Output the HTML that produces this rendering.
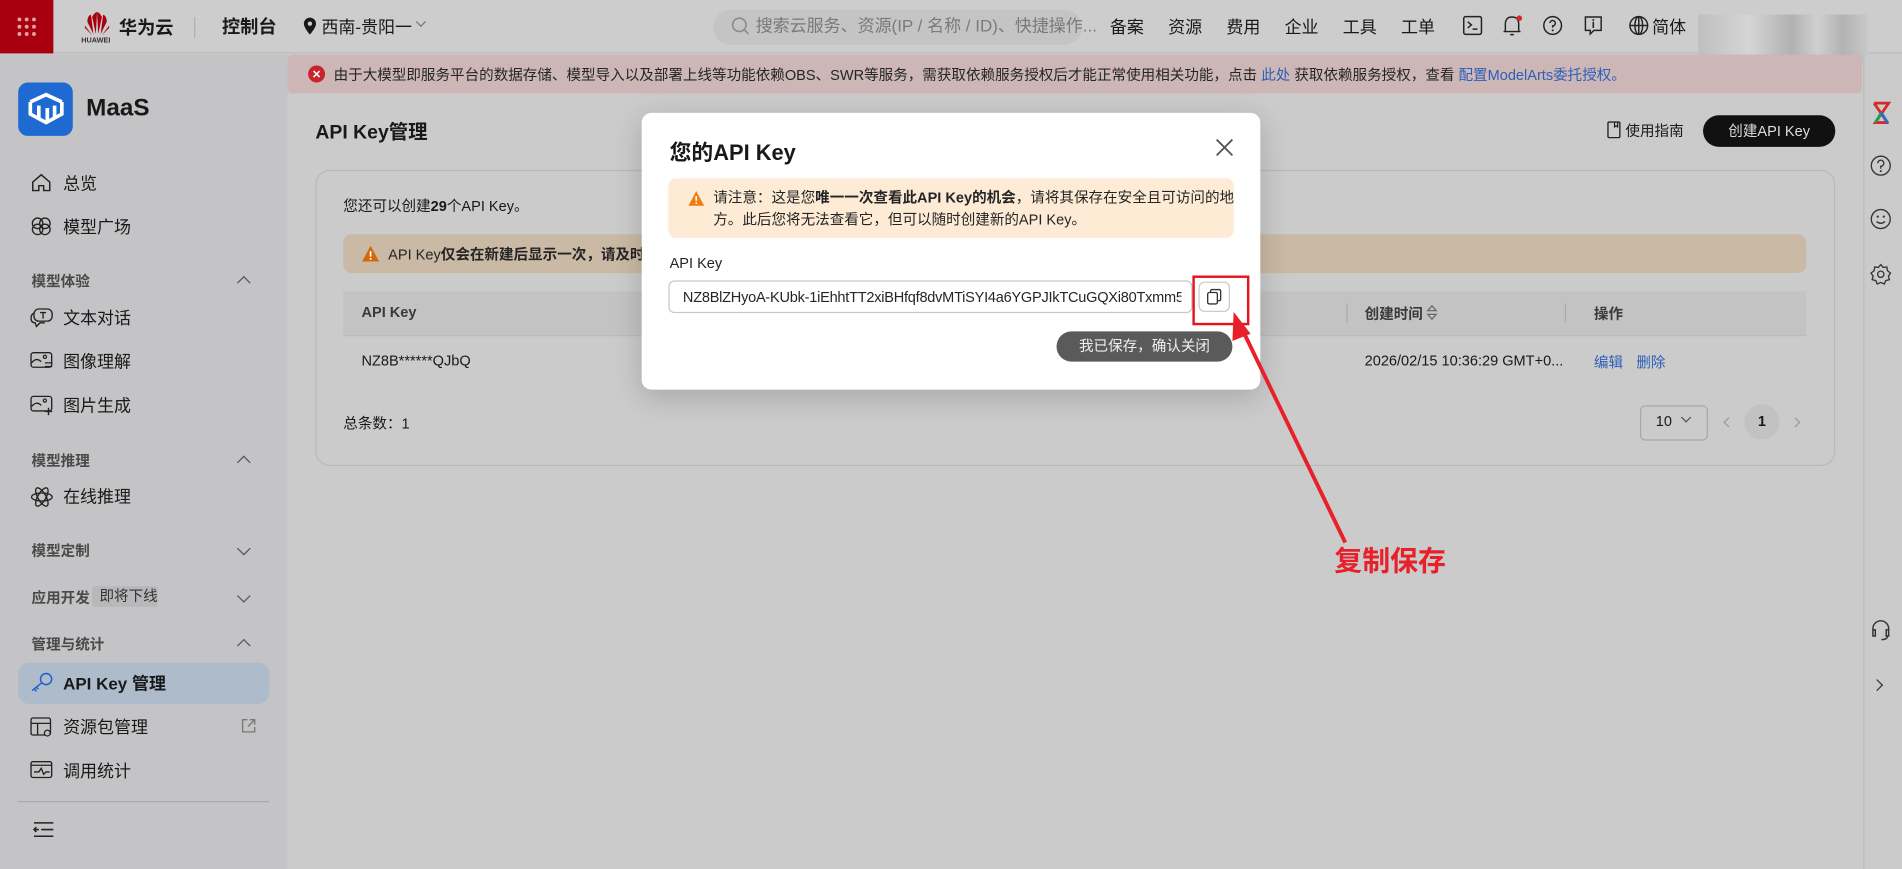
<!DOCTYPE html>
<html><head><meta charset="utf-8"><style>
*{box-sizing:border-box;margin:0;padding:0}
html,body{width:1902px;height:869px;overflow:hidden;background:#cbcbcb}
body{font-family:"Liberation Sans","Noto Sans CJK SC",sans-serif;color:#191919}
#w{position:absolute;left:0;top:0;width:1568px;height:716px;transform:scale(1.21301,1.21369);transform-origin:0 0;background:#cbcbcb;overflow:hidden}
.a{position:absolute;white-space:nowrap}
svg{position:absolute;overflow:visible}
.nav{font-size:14px;color:#191919}
.grp{font-size:12px;font-weight:bold;color:#4a4a4a}
.chev{position:absolute;left:197px;width:8px;height:8px;border-left:1.3px solid #555;border-top:1.3px solid #555}
.up{transform:rotate(45deg)}.dn{transform:rotate(225deg)}
.top{font-size:14px;color:#191919}
</style></head><body><div id="w">
<!-- header -->
<div class="a" style="left:0;top:0;width:1568px;height:44px;background:#cdcdcd;border-bottom:1px solid #bdbdbd"></div>
<div class="a" style="left:0;top:0;width:44px;height:44px;background:#a8000e"></div>
<svg style="left:13px;top:13px" width="18" height="18"><g fill="#e8a0a5"><circle cx="3" cy="3" r="1.6"/><circle cx="9" cy="3" r="1.6"/><circle cx="15" cy="3" r="1.6"/><circle cx="3" cy="9" r="1.6"/><circle cx="9" cy="9" r="1.6"/><circle cx="15" cy="9" r="1.6"/><circle cx="3" cy="15" r="1.6"/><circle cx="9" cy="15" r="1.6"/><circle cx="15" cy="15" r="1.6"/></g></svg>
<svg style="left:70px;top:10px" width="30" height="22"><g fill="#a8000e"><path d="M7 18 L2 8 Q2 3 5 2 Z"/><path d="M9 18 L6 4 Q8 0 10 0 Z"/><path d="M11 18 L14 4 Q12 0 10 0 Z"/><path d="M13 18 L18 8 Q18 3 15 2 Z"/><path d="M6 19 L0 13 L0 11 Z"/><path d="M14 19 L20 13 L20 11 Z"/></g></svg>
<div class="a" style="left:67px;top:31px;font-size:6px;font-weight:bold;color:#333">HUAWEI</div>
<div class="a" style="left:98px;top:12px;font-size:15px;font-weight:bold">华为云</div>
<div class="a" style="left:160px;top:14px;width:1px;height:17px;background:#b0b0b0"></div>
<div class="a" style="left:183px;top:11px;font-size:15px;font-weight:bold">控制台</div>
<svg style="left:250px;top:14px" width="11" height="15"><path d="M5.5 0.5a5 5 0 0 1 5 5c0 3.5-5 9-5 9s-5-5.5-5-9a5 5 0 0 1 5-5z" fill="#191919"/><circle cx="5.5" cy="5.5" r="1.8" fill="#cdcdcd"/></svg>
<div class="a" style="left:265px;top:12px;font-size:14px">西南-贵阳一</div>
<div class="a" style="left:344px;top:15px;width:6px;height:6px;border-right:1.2px solid #777;border-bottom:1.2px solid #777;transform:rotate(45deg)"></div>
<div class="a" style="left:588px;top:8px;width:304px;height:29px;background:#c4c4c4;border-radius:15px"></div>
<svg style="left:603px;top:14px" width="15" height="15"><circle cx="6.5" cy="6.5" r="5.5" fill="none" stroke="#8a8a8a" stroke-width="1.3"/><path d="M10.5 10.5 L14 14" stroke="#8a8a8a" stroke-width="1.3"/></svg>
<div class="a" style="left:623px;top:11px;font-size:14px;color:#7a7a7a">搜索云服务、资源(IP / 名称 / ID)、快捷操作...</div>
<div class="a top" style="left:915px;top:12px">备案</div>
<div class="a top" style="left:963px;top:12px">资源</div>
<div class="a top" style="left:1011px;top:12px">费用</div>
<div class="a top" style="left:1059px;top:12px">企业</div>
<div class="a top" style="left:1107px;top:12px">工具</div>
<div class="a top" style="left:1155px;top:12px">工单</div>
<svg style="left:1206px;top:13px" width="16" height="16"><rect x="0.7" y="0.7" width="14.6" height="14.6" rx="1.5" fill="none" stroke="#222" stroke-width="1.2"/><path d="M4 5l3 2.5-3 2.5M8 11h4" fill="none" stroke="#222" stroke-width="1.2"/></svg>
<svg style="left:1239px;top:12px" width="16" height="18"><path d="M2 14 L2 8 Q2 2 7.5 2 Q13 2 13 8 L13 14 Z M0.5 14h14 M6 16.5h3" fill="none" stroke="#222" stroke-width="1.2"/><circle cx="13.5" cy="3" r="2.3" fill="#d6262c"/></svg>
<svg style="left:1272px;top:13px" width="16" height="16"><circle cx="8" cy="8" r="7.3" fill="none" stroke="#222" stroke-width="1.2"/><path d="M5.8 6a2.2 2.2 0 1 1 2.2 2.3v1.5" fill="none" stroke="#222" stroke-width="1.2"/><circle cx="8" cy="12" r=".8" fill="#222"/></svg>
<svg style="left:1306px;top:13px" width="15" height="17"><path d="M1 1h13v11H8l-3 3v-3H1z" fill="none" stroke="#222" stroke-width="1.2"/><path d="M7.5 5v5" stroke="#222" stroke-width="1.3"/><circle cx="7.5" cy="3.5" r=".8" fill="#222"/></svg>
<svg style="left:1343px;top:13px" width="16" height="16"><circle cx="8" cy="8" r="7.3" fill="none" stroke="#222" stroke-width="1.2"/><ellipse cx="8" cy="8" rx="3.2" ry="7.3" fill="none" stroke="#222" stroke-width="1.2"/><path d="M0.7 8h14.6M8 .7v14.6" stroke="#222" stroke-width="1.2"/></svg>
<div class="a top" style="left:1362px;top:12px">简体</div>
<div class="a" style="left:1400px;top:12px;width:140px;height:40px;background:linear-gradient(90deg,#bdbdbd 0,#d6d6d6 30%,#aeaeae 55%,#d0d0d0 70%,#b0b0b0 85%,#c8c8c8 100%);opacity:.9"></div>
<!-- sidebar -->
<div class="a" style="left:0;top:45px;width:237px;height:671px;background:#c4c4c6"></div>
<div class="a" style="left:15px;top:68px;width:45px;height:44px;background:#1e69d2;border-radius:8px"></div>
<svg style="left:22px;top:76px" width="32" height="28"><path d="M3 8 L16 2 L29 8 M3 8 L3 18 L16 25 L29 18 L29 8 M10 11 L10 21 M17 13 L17 24 M23 11 L23 21" fill="none" stroke="#fff" stroke-width="3"/></svg>
<div class="a" style="left:71px;top:78px;font-size:20px;font-weight:bold;color:#191919">MaaS</div>
<svg style="left:26px;top:143px" width="16" height="15"><path d="M1 7 L8 1 L15 7 L15 14 L10 14 L10 10 L6 10 L6 14 L1 14 Z" fill="none" stroke="#222" stroke-width="1.2"/></svg>
<div class="a nav" style="left:52px;top:141px">总览</div>
<svg style="left:25px;top:179px" width="18" height="15"><circle cx="6" cy="5" r="4.3" fill="none" stroke="#222" stroke-width="1.1"/><circle cx="12" cy="5" r="4.3" fill="none" stroke="#222" stroke-width="1.1"/><circle cx="6" cy="10" r="4.3" fill="none" stroke="#222" stroke-width="1.1"/><circle cx="12" cy="10" r="4.3" fill="none" stroke="#222" stroke-width="1.1"/></svg>
<div class="a nav" style="left:52px;top:177px">模型广场</div>
<div class="a grp" style="left:26px;top:223px">模型体验</div><div class="chev up" style="top:229px"></div>
<svg style="left:25px;top:254px" width="19" height="16"><rect x="3" y=".6" width="15" height="10" rx="4" fill="none" stroke="#222" stroke-width="1.1"/><path d="M3 4 Q.6 5 .6 8 Q.6 12 4 12 L5 15 L8 12 L12 12" fill="none" stroke="#222" stroke-width="1.1"/><path d="M8 3.5h5M10.5 3.5v5" stroke="#222" stroke-width="1.1"/></svg>
<div class="a nav" style="left:52px;top:252px">文本对话</div>
<svg style="left:25px;top:290px" width="19" height="15"><rect x=".6" y=".6" width="17" height="12" rx="2" fill="none" stroke="#222" stroke-width="1.1"/><path d="M1 9 Q5 4 9 8" fill="none" stroke="#222" stroke-width="1.1"/><circle cx="12" cy="4" r="1.3" fill="none" stroke="#222"/><path d="M12 9h6M12 12h6" stroke="#222"/></svg>
<div class="a nav" style="left:52px;top:288px">图像理解</div>
<svg style="left:25px;top:326px" width="19" height="17"><rect x=".6" y=".6" width="17" height="12" rx="2" fill="none" stroke="#222" stroke-width="1.1"/><path d="M1 9 Q5 4 9 8" fill="none" stroke="#222" stroke-width="1.1"/><circle cx="12" cy="4" r="1.3" fill="none" stroke="#222"/><path d="M15 10v6M12 13h6" stroke="#222" stroke-width="1.2"/></svg>
<div class="a nav" style="left:52px;top:324px">图片生成</div>
<div class="a grp" style="left:26px;top:371px">模型推理</div><div class="chev up" style="top:377px"></div>
<svg style="left:25px;top:402px" width="19" height="15"><ellipse cx="9.5" cy="7.5" rx="8.5" ry="3.3" fill="none" stroke="#222" stroke-width="1.1"/><ellipse cx="9.5" cy="7.5" rx="8.5" ry="3.3" transform="rotate(60 9.5 7.5)" fill="none" stroke="#222" stroke-width="1.1"/><ellipse cx="9.5" cy="7.5" rx="8.5" ry="3.3" transform="rotate(-60 9.5 7.5)" fill="none" stroke="#222" stroke-width="1.1"/></svg>
<div class="a nav" style="left:52px;top:399px">在线推理</div>
<div class="a grp" style="left:26px;top:445px">模型定制</div><div class="chev dn" style="top:448px"></div>
<div class="a grp" style="left:26px;top:484px">应用开发</div>
<div class="a" style="left:76px;top:483px;width:54px;height:17px;background:#b8b8ba;border-radius:2px;font-size:12px;color:#333;padding-left:6px;line-height:17px">即将下线</div>
<div class="chev dn" style="top:487px"></div>
<div class="a grp" style="left:26px;top:522px">管理与统计</div><div class="chev up" style="top:528px"></div>
<div class="a" style="left:15px;top:546px;width:207px;height:34px;background:#aebbcb;border-radius:9px"></div>
<svg style="left:25px;top:554px" width="19" height="16"><circle cx="13" cy="5.5" r="4.6" fill="none" stroke="#1e5fc8" stroke-width="1.2"/><path d="M9.5 8.5 L1.5 15 M3.2 13.6 L5 15.5 M5 12.2 L6.6 13.8" stroke="#1e5fc8" stroke-width="1.2" fill="none"/></svg>
<div class="a" style="left:52px;top:553px;font-size:14px;font-weight:bold">API Key 管理</div>
<svg style="left:25px;top:591px" width="19" height="17"><rect x=".6" y=".6" width="16" height="14" rx="1.5" fill="none" stroke="#222" stroke-width="1.1"/><path d="M.6 5h16M6 5v10" stroke="#222" stroke-width="1.1"/><circle cx="14" cy="13" r="2.4" fill="#c4c4c6" stroke="#222"/></svg>
<div class="a nav" style="left:52px;top:589px">资源包管理</div>
<svg style="left:199px;top:592px" width="12" height="12"><path d="M5 1H1v10h10V7M7 1h4v4M11 1L5.5 6.5" fill="none" stroke="#777" stroke-width="1.1"/></svg>
<svg style="left:25px;top:627px" width="19" height="15"><rect x=".6" y=".6" width="17" height="13" rx="1.5" fill="none" stroke="#222" stroke-width="1.1"/><path d="M.6 3.5h17M3 9h4l2-3 2 5 2-2h3" fill="none" stroke="#222" stroke-width="1.1"/></svg>
<div class="a nav" style="left:52px;top:625px">调用统计</div>
<div class="a" style="left:15px;top:660px;width:207px;height:1px;background:#aaa"></div>
<svg style="left:28px;top:677px" width="16" height="13"><path d="M0 1h16M6 6.5h10M0 12h16M0 6.5h4M2 4.5L0 6.5 2 8.5" fill="none" stroke="#222" stroke-width="1.3"/></svg>
<!-- right bar -->
<div class="a" style="left:1536px;top:45px;width:32px;height:671px;background:#cbcbcb;border-left:1px solid #bcbcbc"></div>
<svg style="left:1543px;top:84px" width="16" height="18"><path d="M2 1h12L3 17h11M2 1l11 16" fill="none" stroke="#d52a2a" stroke-width="2.3"/><path d="M3 17L8 9" stroke="#18a058" stroke-width="2.3"/><path d="M13 17L8 9" stroke="#1e6fd9" stroke-width="2.3"/></svg>
<svg style="left:1542px;top:128px" width="17" height="17"><circle cx="8.5" cy="8.5" r="7.8" fill="none" stroke="#333" stroke-width="1.1"/><path d="M6 6.5a2.5 2.5 0 1 1 2.5 2.5v2" fill="none" stroke="#333" stroke-width="1.1"/><circle cx="8.5" cy="13" r=".8" fill="#333"/></svg>
<svg style="left:1542px;top:172px" width="17" height="17"><circle cx="8.5" cy="8.5" r="7.8" fill="none" stroke="#333" stroke-width="1.1"/><circle cx="6" cy="6.5" r=".9" fill="#333"/><circle cx="11" cy="6.5" r=".9" fill="#333"/><path d="M5 10.5q3.5 3 7 0" fill="none" stroke="#333" stroke-width="1.1"/></svg>
<svg style="left:1542px;top:217px" width="17" height="18"><path d="M8.5 1l2 2.3 3-.3.5 3 2.5 2-1.7 2.5.8 2.9-3 .8-1.2 2.8-2.9-1.3-2.9 1.3-1.2-2.8-3-.8.8-2.9L.5 8l2.5-2 .5-3 3 .3z" fill="none" stroke="#333" stroke-width="1.1"/><circle cx="8.5" cy="9" r="2.6" fill="none" stroke="#333" stroke-width="1.1"/></svg>
<svg style="left:1542px;top:510px" width="17" height="18"><path d="M2 10V8a6.5 6.5 0 0 1 13 0v2M2 9h2v5H2zM13 9h2v5h-2zM14 14q0 3-5 3" fill="none" stroke="#333" stroke-width="1.2"/></svg>
<div class="a" style="left:1544px;top:561px;width:7px;height:7px;border-right:1.3px solid #333;border-top:1.3px solid #333;transform:rotate(45deg)"></div>
<!-- banner -->
<div class="a" style="left:237px;top:45px;width:1298px;height:32px;background:#cdb6b6;border-radius:4px"></div>
<svg style="left:254px;top:54px" width="14" height="14"><circle cx="7" cy="7" r="7" fill="#c8242c"/><path d="M4.5 4.5l5 5M9.5 4.5l-5 5" stroke="#fff" stroke-width="1.3"/></svg>
<div class="a" style="left:275px;top:53px;font-size:12px;color:#252525">由于大模型即服务平台的数据存储、模型导入以及部署上线等功能依赖OBS、SWR等服务，需获取依赖服务授权后才能正常使用相关功能，点击 <span style="color:#2c5fb8">此处</span> 获取依赖服务授权，查看 <span style="color:#2c5fb8">配置ModelArts委托授权。</span></div>
<!-- main -->
<div class="a" style="left:260px;top:95px;font-size:16px;font-weight:bold">API Key管理</div>
<svg style="left:1325px;top:100px" width="11" height="14"><rect x=".6" y=".6" width="9.8" height="12.8" rx="1" fill="none" stroke="#222" stroke-width="1.1"/><path d="M6 .6v4l1.3-1 1.3 1v-4" fill="none" stroke="#222"/></svg>
<div class="a" style="left:1340px;top:99px;font-size:12px">使用指南</div>
<div class="a" style="left:1404px;top:95px;width:109px;height:26px;background:#111;border-radius:13px;color:#ddd;font-size:12px;line-height:26px;text-align:center">创建API Key</div>
<div class="a" style="left:260px;top:140px;width:1253px;height:244px;border:1px solid #b9b9b9;border-radius:12px;background:#cbcbcb"></div>
<div class="a" style="left:283px;top:161px;font-size:12px">您还可以创建<b>29</b>个API Key。</div>
<div class="a" style="left:283px;top:193px;width:1206px;height:32px;background:#cab9a4;border-radius:7px"></div>
<svg style="left:298px;top:202px" width="15" height="14"><path d="M7.5 .5L14.5 13.5H.5z" fill="#d2680a"/><path d="M7.5 5v4.5" stroke="#fff" stroke-width="1.4"/><circle cx="7.5" cy="11.3" r=".8" fill="#fff"/></svg>
<div class="a" style="left:320px;top:201px;font-size:12px;color:#252525">API Key<b>仅会在新建后显示一次，请及时复制</b></div>
<div class="a" style="left:283px;top:240px;width:1206px;height:37px;background:#c3c3c3;border-bottom:1px solid #bbb"></div>
<div class="a" style="left:298px;top:250px;font-size:12px;font-weight:bold;color:#3a3a3a">API Key</div>
<div class="a" style="left:1110px;top:250px;width:1px;height:16px;background:#aaa"></div>
<div class="a" style="left:1290px;top:250px;width:1px;height:16px;background:#aaa"></div>
<div class="a" style="left:1125px;top:250px;font-size:12px;font-weight:bold;color:#3a3a3a">创建时间</div>
<svg style="left:1176px;top:251px" width="9" height="13"><path d="M1 5l3.5-4 3.5 4zM1 8l3.5 4 3.5-4z" fill="none" stroke="#666"/></svg>
<div class="a" style="left:1314px;top:250px;font-size:12px;font-weight:bold;color:#3a3a3a">操作</div>
<div class="a" style="left:298px;top:290px;font-size:12px">NZ8B******QJbQ</div>
<div class="a" style="left:1125px;top:290px;font-size:12px">2026/02/15 10:36:29 GMT+0...</div>
<div class="a" style="left:1314px;top:290px;font-size:12px;color:#2c5fb8">编辑</div>
<div class="a" style="left:1349px;top:290px;font-size:12px;color:#2c5fb8">删除</div>
<div class="a" style="left:283px;top:340px;font-size:12px">总条数：1</div>
<div class="a" style="left:1352px;top:334px;width:56px;height:29px;border:1px solid #a8a8a8;border-radius:4px"></div>
<div class="a" style="left:1365px;top:340px;font-size:12px">10</div>
<div class="a" style="left:1387px;top:341px;width:6px;height:6px;border-right:1.1px solid #555;border-bottom:1.1px solid #555;transform:rotate(45deg)"></div>
<div class="a" style="left:1422px;top:345px;width:6px;height:6px;border-left:1.1px solid #999;border-bottom:1.1px solid #999;transform:rotate(45deg)"></div>
<div class="a" style="left:1438px;top:333px;width:29px;height:29px;border-radius:50%;background:#c2c2c2;font-size:12px;font-weight:bold;text-align:center;line-height:29px">1</div>
<div class="a" style="left:1477px;top:345px;width:6px;height:6px;border-right:1.1px solid #999;border-top:1.1px solid #999;transform:rotate(45deg)"></div>
<!-- modal -->
<div class="a" style="left:529px;top:93px;width:510px;height:228px;background:#fff;border-radius:8px;box-shadow:0 6px 24px rgba(0,0,0,.18)"></div>
<div class="a" style="left:552px;top:112px;font-size:18px;font-weight:bold">您的API Key</div>
<svg style="left:1002px;top:114px" width="15" height="15"><path d="M1 1l13 13M14 1L1 14" stroke="#555" stroke-width="1.5"/></svg>
<div class="a" style="left:551px;top:147px;width:466px;height:49px;background:#fdebd5;border-radius:6px"></div>
<svg style="left:567px;top:157px" width="14" height="13"><path d="M7 .5L13.5 12.5H.5z" fill="#f07c10"/><path d="M7 4.5v4" stroke="#fff" stroke-width="1.4"/><circle cx="7" cy="10.3" r=".8" fill="#fff"/></svg>
<div class="a" style="left:588px;top:154px;font-size:12px;color:#252525;line-height:18px">请注意：这是您<b>唯一一次查看此API Key的机会</b>，请将其保存在安全且可访问的地<br>方。此后您将无法查看它，但可以随时创建新的API Key。</div>
<div class="a" style="left:552px;top:210px;font-size:12px;color:#252525">API Key</div>
<div class="a" style="left:551px;top:231px;width:432px;height:27px;border:1px solid #c8c8c8;border-radius:5px;overflow:hidden"><div style="position:absolute;left:11px;top:6px;font-size:12px;color:#252525;width:411px;overflow:hidden;letter-spacing:-0.2px">NZ8BlZHyoA-KUbk-1iEhhtTT2xiBHfqf8dvMTiSYI4a6YGPJIkTCuGQXi80Txmm5Xyu</div></div>
<div class="a" style="left:988px;top:232px;width:26px;height:25px;border:1px solid #c8c8c8;border-radius:5px"></div>
<svg style="left:995px;top:238px" width="12" height="13"><rect x=".6" y="3" width="8" height="9.4" rx="1.3" fill="none" stroke="#333" stroke-width="1.1"/><path d="M3 2.5V1.8Q3 .6 4.3 .6H10Q11.3 .6 11.3 1.8V8.5Q11.3 9.8 10 9.8H9" fill="none" stroke="#333" stroke-width="1.1"/></svg>
<div class="a" style="left:983px;top:227px;width:47px;height:41px;border:2px solid #e3141c"></div>
<div class="a" style="left:871px;top:273px;width:145px;height:25px;background:#5a5a5a;border-radius:13px;color:#eee;font-size:12px;line-height:25px;text-align:center">我已保存，确认关闭</div>
<!-- arrow -->
<svg style="left:0;top:0" width="1568" height="716"><path d="M1109 447 L1021 265" stroke="#e8202a" stroke-width="3.2" fill="none"/><path d="M1017 257 L1031 275 L1016 281 Z" fill="#e8202a"/></svg>
<div class="a" style="left:1100px;top:443px;font-size:23px;font-weight:bold;color:#e8202a">复制保存</div>
</div></body></html>
